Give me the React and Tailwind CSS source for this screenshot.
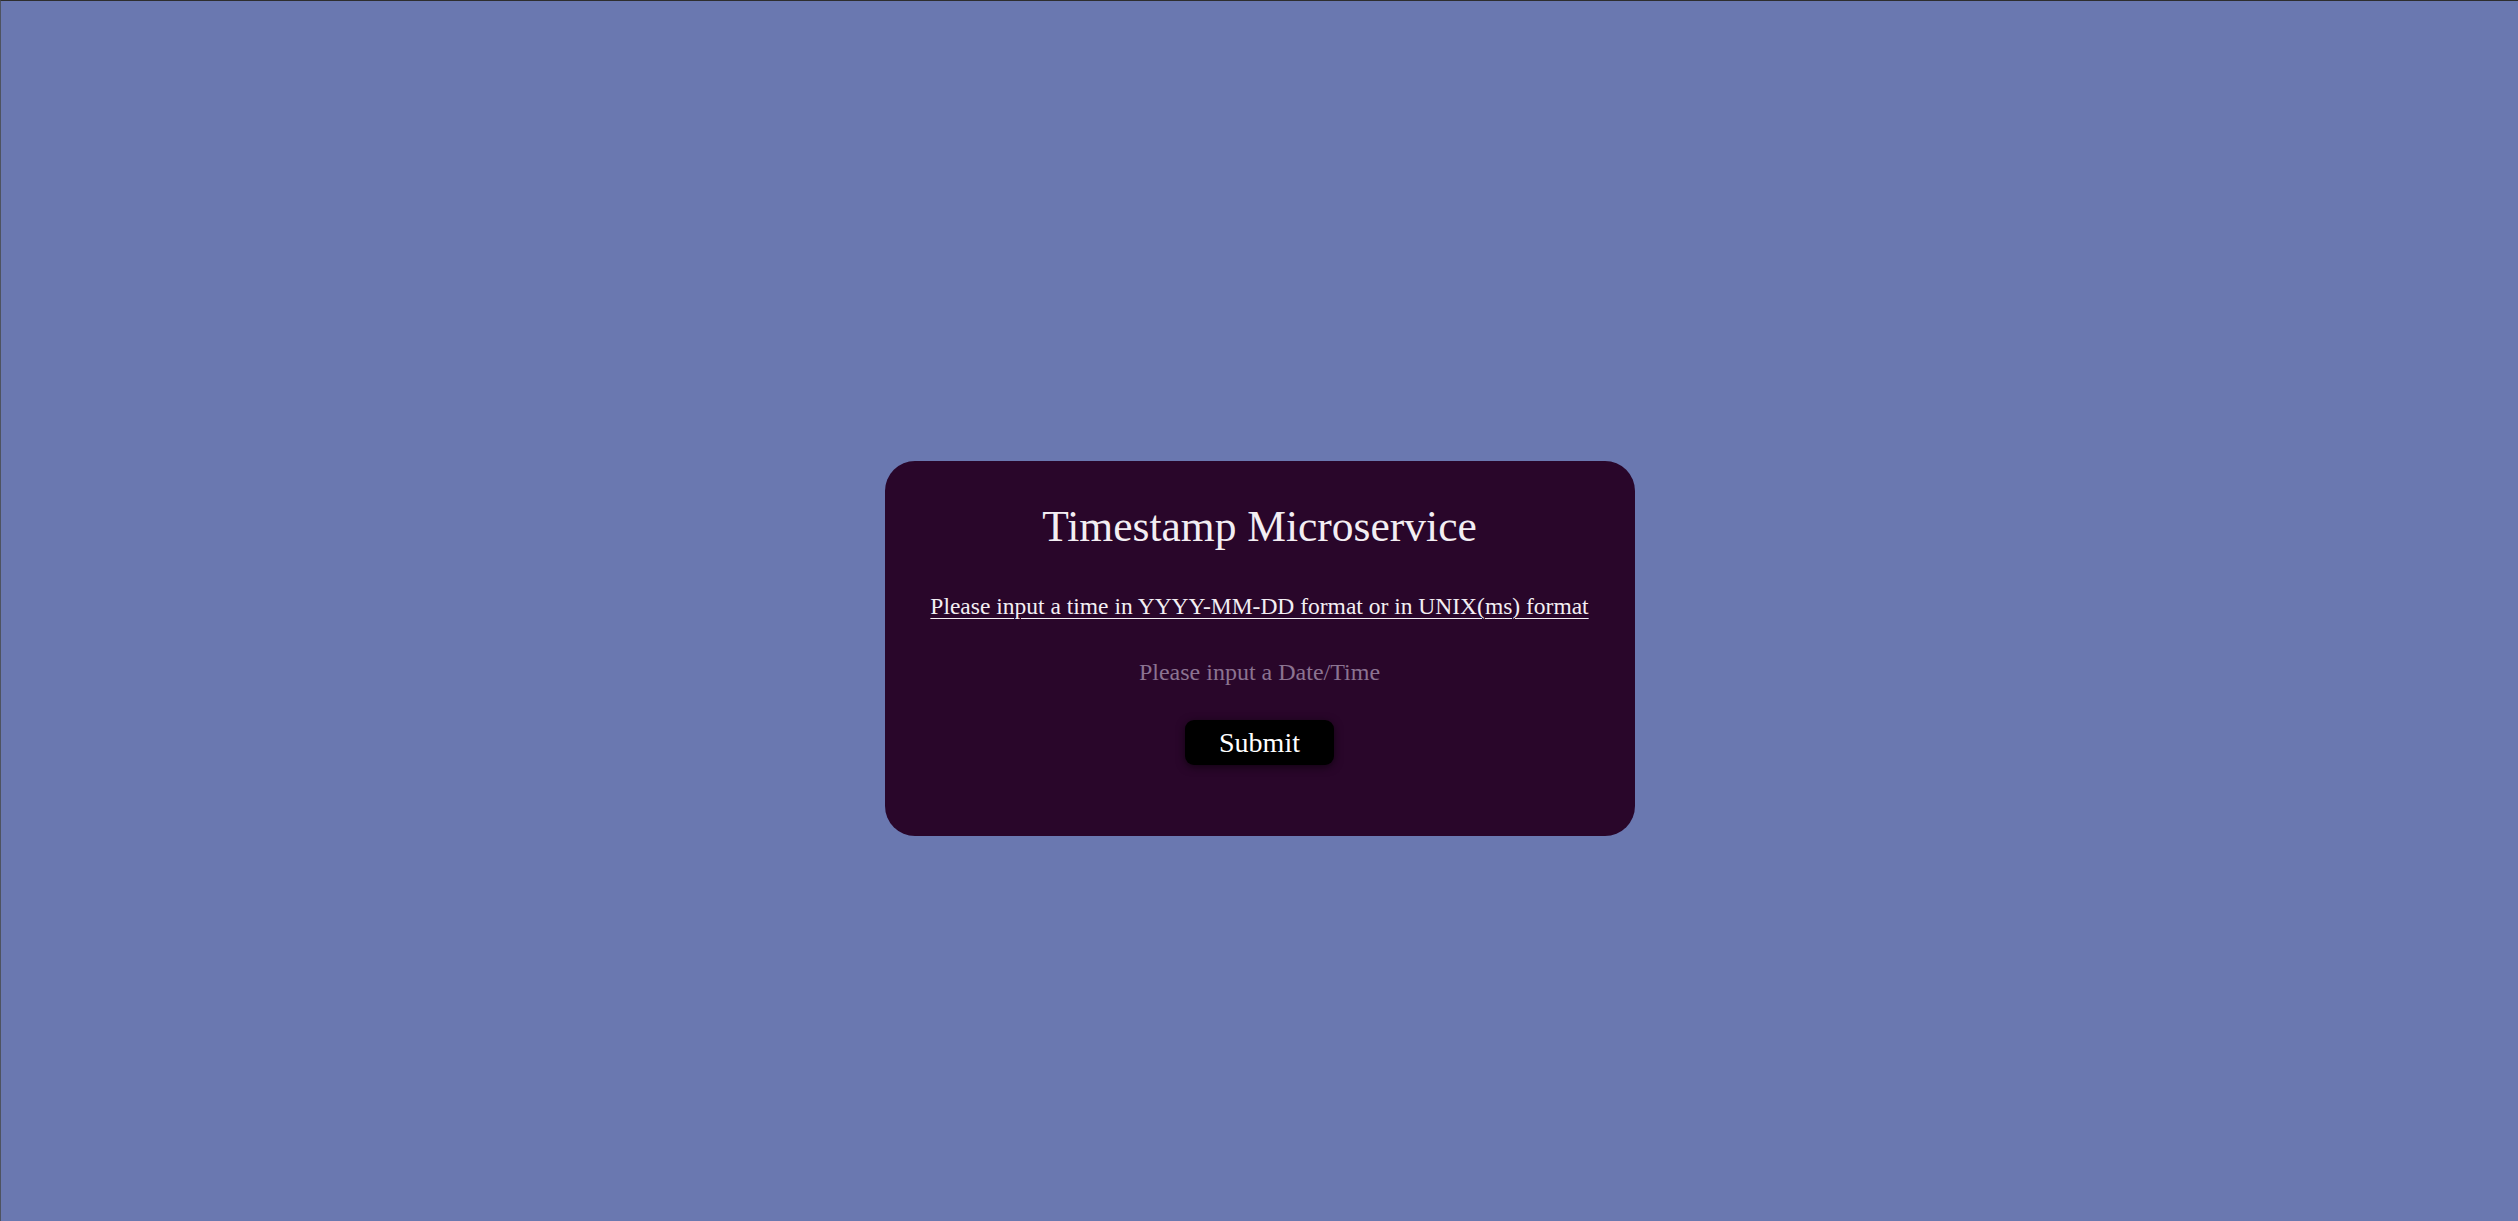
export default function App() {
  return (
    <div
      className="w-full h-[1221px] bg-[#6a78b0] border-t border-l border-t-[#2e2e2e] border-l-[#4e5360] flex justify-center pt-[460px]"
      style={{ fontFamily: '"Liberation Serif", "DejaVu Serif", serif' }}
    >
      <div className="w-[750px] h-[375px] bg-[#29062a] rounded-[30px] flex flex-col items-center pt-[41px]">
        <h1 className="text-[43.5px] leading-[48px] text-[#f3eef3] font-normal">
          Timestamp Microservice
        </h1>
        <p className="mt-[41px] text-[23.5px] leading-[30px] text-[#f3eef3] underline underline-offset-[4px] decoration-1">
          Please input a time in YYYY-MM-DD format or in UNIX(ms) format
        </p>
        <input
          type="text"
          placeholder="Please input a Date/Time"
          className="mt-[31px] w-[400px] h-[40px] bg-transparent text-center text-[24px] text-white placeholder:text-[#8b7391] outline-none border-0"
          style={{ fontFamily: '"Liberation Serif", "DejaVu Serif", serif' }}
        />
        <button
          className="mt-[28px] w-[149px] h-[45px] bg-black rounded-[9px] text-[28px] leading-[45px] text-white shadow-[0_2px_8px_rgba(0,0,0,0.55)]"
          style={{ fontFamily: '"Liberation Serif", "DejaVu Serif", serif' }}
        >
          Submit
        </button>
      </div>
    </div>
  );
}
